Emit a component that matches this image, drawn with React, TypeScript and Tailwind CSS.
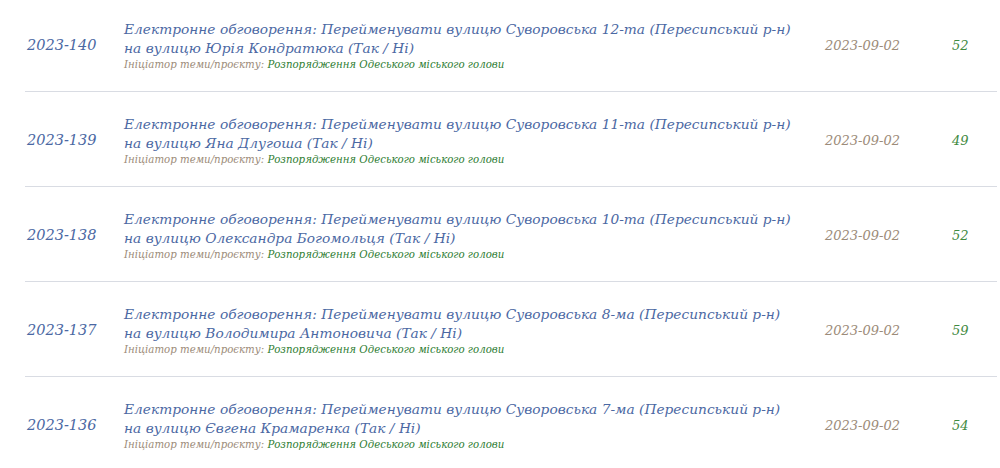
import React from "react";

type Row = { id: string; street: string; to: string; votes: number };

const rows: Row[] = [
  { id: "2023-140", street: "12-та", to: "Юрія Кондратюка", votes: 52 },
  { id: "2023-139", street: "11-та", to: "Яна Длугоша", votes: 49 },
  { id: "2023-138", street: "10-та", to: "Олександра Богомольця", votes: 52 },
  { id: "2023-137", street: "8-ма", to: "Володимира Антоновича", votes: 59 },
  { id: "2023-136", street: "7-ма", to: "Євгена Крамаренка", votes: 54 },
];

const App: React.FC = () => {
  return (
    <div className="w-[1000px] h-[468px] overflow-hidden bg-white font-['DejaVu_Serif',serif] italic">
      <div className="pl-[25px] pr-[3px] -mt-[3px]">
        {rows.map((r) => (
          <div key={r.id} className="flex items-center h-[95px] pt-[3px] border-b border-[#d9dce3]">
            <div className="w-[99px] pl-[2px] text-[14.5px] text-[#4b68a3]">{r.id}</div>
            <div className="flex-1">
              <div className="text-[13.75px] leading-[19px] text-[#4b68a3]">
                Електронне обговорення: Перейменувати вулицю Суворовська {r.street} (Пересипський р-н)
                <br />
                на вулицю {r.to} (Так / Ні)
              </div>
              <div className="text-[10.2px] leading-[14px]">
                <span className="text-[#9c8b79]">Ініціатор теми/проєкту: </span>
                <span className="text-[#2e7d32]">Розпорядження Одеського міського голови</span>
              </div>
            </div>
            <div className="w-[127px] text-[13px] text-[#9c8b79]">2023-09-02</div>
            <div className="w-[45px] text-[13px] text-[#3f8a3f]">{r.votes}</div>
          </div>
        ))}
      </div>
    </div>
  );
};

export default App;
